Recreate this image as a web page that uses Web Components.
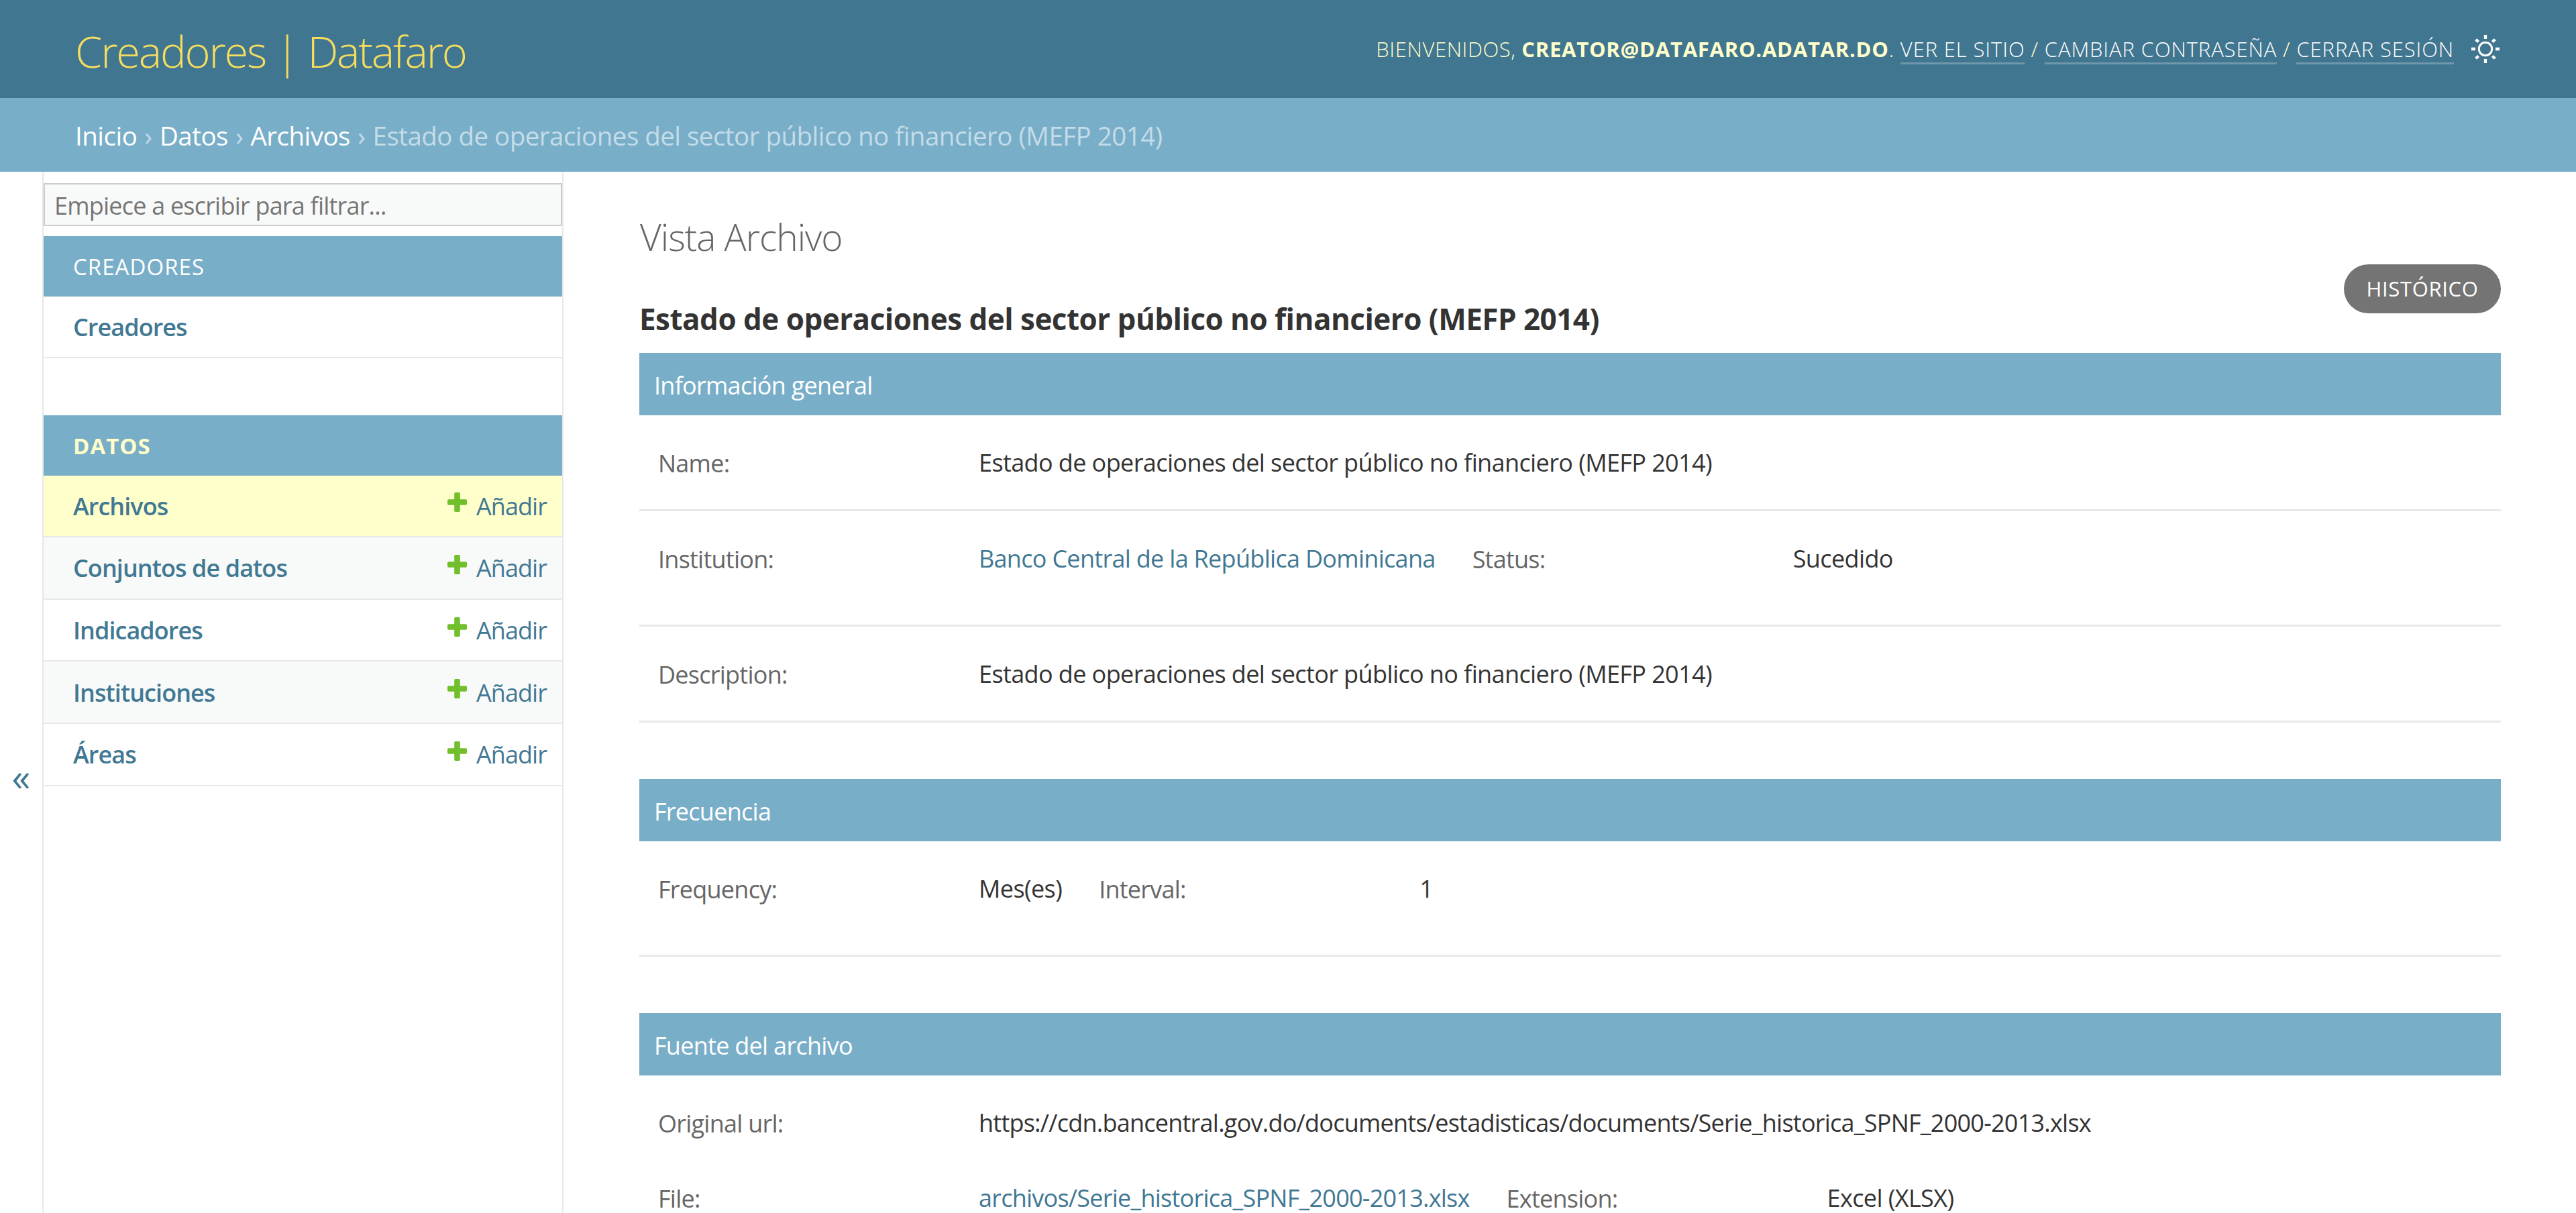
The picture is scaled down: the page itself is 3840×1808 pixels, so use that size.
<!DOCTYPE html>
<html lang="es">
<head>
<meta charset="utf-8">
<title>Estado de operaciones del sector público no financiero (MEFP 2014) | Datafaro</title>
<style>
  :root {
    --primary: #79aec8;
    --secondary: #417690;
    --accent: #f5dd5d;
    --link: #417893;
    --body-fg: #333;
    --quiet: #666;
    --hairline: #e8e8e8;
    --darkened: #f8faf9;
    --selected: #ffffcc;
  }

  body {
    margin: 0;
    height: 1808px;
    overflow: hidden;
    background: #fff;
    color: var(--body-fg);
    font-family: "Open Sans", "Liberation Sans", sans-serif;
    font-size: 36px;
  }

  .main {
    display: flex;
    height: 1552px;
  }
</style>
</head>
<body>
  <admin-header>
    <span slot="title">Creadores | Datafaro</span>
    <span slot="user">creator@datafaro.adatar.do</span>
  </admin-header>

  <admin-breadcrumbs current="Estado de operaciones del sector público no financiero (MEFP 2014)">
    <a>Inicio</a><a>Datos</a><a>Archivos</a>
  </admin-breadcrumbs>

  <div class="main">
    <nav-toggle></nav-toggle>
    <nav-sidebar>
      <app-module caption="Creadores">
        <model-row>Creadores</model-row>
      </app-module>
      <app-module caption="Datos" current>
        <model-row add current>Archivos</model-row>
        <model-row add alt>Conjuntos de datos</model-row>
        <model-row add>Indicadores</model-row>
        <model-row add alt>Instituciones</model-row>
        <model-row add>Áreas</model-row>
      </app-module>
    </nav-sidebar>

    <admin-content heading="Vista Archivo" subheading="Estado de operaciones del sector público no financiero (MEFP 2014)">
      <form-module heading="Información general">
        <form-row>
          <form-field label="Name:">Estado de operaciones del sector público no financiero (MEFP 2014)</form-field>
        </form-row>
        <form-row multi>
          <form-field label="Institution:" link>Banco Central de la República Dominicana</form-field>
          <form-field label="Status:">Sucedido</form-field>
        </form-row>
        <form-row>
          <form-field label="Description:">Estado de operaciones del sector público no financiero (MEFP 2014)</form-field>
        </form-row>
      </form-module>
      <form-module heading="Frecuencia">
        <form-row multi>
          <form-field label="Frequency:">Mes(es)</form-field>
          <form-field label="Interval:">1</form-field>
        </form-row>
      </form-module>
      <form-module heading="Fuente del archivo">
        <form-row open>
          <form-field label="Original url:" url>https://cdn.bancentral.gov.do/documents/estadisticas/documents/Serie_historica_SPNF_2000-2013.xlsx</form-field>
        </form-row>
        <form-row multi>
          <form-field label="File:" link url>archivos/Serie_historica_SPNF_2000-2013.xlsx</form-field>
          <form-field label="Extension:">Excel (XLSX)</form-field>
        </form-row>
      </form-module>
    </admin-content>
  </div>

<script>
// Small helper: open shadow root with the given markup
class BaseElement extends HTMLElement {
  constructor() {
    super();
    this.attachShadow({ mode: 'open' });
  }

  connectedCallback() {
    this.shadowRoot.innerHTML = this.render();
  }
}

class AdminHeader extends BaseElement {
  render() {
    return `
      <style>
        :host {
          display: flex;
          align-items: center;
          justify-content: space-between;
          box-sizing: border-box;
          height: 146px;
          padding: 0 114px 0 112px;
          background: var(--secondary);
          color: #ffc;
        }
        .brand {
          padding-top: 5px;
          color: var(--accent);
          font-size: 65px;
          font-weight: 300;
          letter-spacing: -2.2px;
        }
        .tools {
          display: flex;
          align-items: center;
          font-size: 31px;
          font-weight: 300;
          line-height: 40px;
          letter-spacing: 0.88px;
          text-transform: uppercase;
          white-space: pre;
        }
        .hello { letter-spacing: 0.6px; }
        strong { font-weight: 700; letter-spacing: 0.75px; }
        a {
          display: inline-block;
          margin-bottom: -3px;
          border-bottom: 3px solid rgba(255, 255, 255, 0.25);
          color: #fff;
        }
        svg {
          width: 42px;
          height: 42px;
          margin-left: 26px;
          stroke: #fff;
          fill: none;
        }
      </style>
      <div class="brand"><slot name="title"></slot></div>
      <div class="tools">
        <div><span class="hello">Bienvenidos, </span><strong><slot name="user"></slot></strong>. <a>Ver el sitio</a> / <a>Cambiar contraseña</a> / <a>Cerrar sesión</a></div>
        <svg viewBox="-21 -21 42 42">
          <circle r="9.7" stroke-width="2.9"/>
          <path stroke-width="4.3" d="M0-21V-15M0 21V15M-21 0H-15M21 0H15M-14.3-14.3L-10.4-10.4M14.3-14.3L10.4-10.4M-14.3 14.3L-10.4 10.4M14.3 14.3L10.4 10.4"/>
        </svg>
      </div>`;
  }
}

class AdminBreadcrumbs extends BaseElement {
  render() {
    return `
      <style>
        :host {
          display: flex;
          align-items: center;
          box-sizing: border-box;
          height: 110px;
          padding: 2px 112px 0;
          background: var(--primary);
          color: #c4dce8;
          font-size: 38.5px;
          letter-spacing: -0.52px;
          white-space: pre;
        }
        a { color: #fff; }
        i { padding: 0 1.8px; font-style: normal; }
      </style>
      ${[...this.querySelectorAll('a')].map(a => `<a>${a.textContent}</a><i> › </i>`).join('')}<span>${this.getAttribute('current')}</span>`.trim();
  }
}

class NavToggle extends BaseElement {
  render() {
    return `
      <style>
        :host {
          display: block;
          box-sizing: border-box;
          flex: 0 0 65px;
          padding-top: 871px;
          border-right: 2px solid var(--hairline);
          color: var(--link);
          font-size: 56px;
          line-height: 60px;
          text-align: center;
        }
      </style>
      «`;
  }
}

class NavSidebar extends BaseElement {
  render() {
    return `
      <style>
        :host {
          display: flex;
          flex-direction: column;
          flex: 0 0 773px;
          padding-top: 17px;
          border-right: 2px solid var(--hairline);
        }
        .filter {
          box-sizing: border-box;
          height: 64px;
          margin-bottom: 15px;
          padding: 2px 14px 0;
          border: 2px solid #ccc;
          background: var(--darkened);
          color: #757575;
          line-height: 60px;
          letter-spacing: -0.79px;
        }
        .apps {
          display: flex;
          flex-direction: column;
          gap: 85px;
        }
      </style>
      <div class="filter">Empiece a escribir para filtrar...</div>
      <div class="apps"><slot></slot></div>`;
  }
}

class AppModule extends BaseElement {
  render() {
    return `
      <style>
        :host { display: block; }
        .caption {
          box-sizing: border-box;
          height: 89.5px;
          padding: 2px 44px 0;
          background: var(--primary);
          color: #fff;
          font-size: 33px;
          line-height: 88px;
          letter-spacing: 1.04px;
          text-transform: uppercase;
        }
        :host([current]) .caption {
          color: #ffc;
          font-weight: 700;
          letter-spacing: 1px;
        }
      </style>
      <div class="caption">${this.getAttribute('caption')}</div>
      <slot></slot>`;
  }
}

class ModelRow extends BaseElement {
  render() {
    const add = this.hasAttribute('add') ? `
      <div class="add">
        <svg viewBox="0 0 29 29">
          <rect x="10.2" width="8.6" height="29" rx="1.8"/>
          <rect y="10.2" width="29" height="8.6" rx="1.8"/>
        </svg>
        <span>Añadir</span>
      </div>` : '';
    return `
      <style>
        :host {
          display: flex;
          align-items: center;
          justify-content: space-between;
          box-sizing: border-box;
          height: 92.6px;
          padding: 1px 23px 0 44px;
          border-bottom: 2px solid var(--hairline);
          color: var(--link);
          font-weight: 600;
          letter-spacing: -0.95px;
        }
        :host([alt]) { background: var(--darkened); }
        :host([current]) { background: var(--selected); }
        .add {
          display: flex;
          align-items: center;
          gap: 14px;
          font-weight: 400;
          letter-spacing: -0.95px;
        }
        svg {
          width: 29px;
          height: 29px;
          margin-bottom: 11px;
          fill: #70bf2b;
        }
      </style>
      <slot></slot>${add}`;
  }
}

class AdminContent extends BaseElement {
  render() {
    return `
      <style>
        :host {
          display: block;
          flex: 1;
          padding: 57px 112px 0 113px;
        }
        h1, h2 { margin: 0; white-space: nowrap; }
        h1 {
          color: var(--quiet);
          font-size: 55px;
          font-weight: 300;
          line-height: 80px;
          letter-spacing: -1px;
          padding-left: 1px;
        }
        .top {
          display: flex;
          justify-content: space-between;
          align-items: flex-start;
          height: 132px;
        }
        h2 {
          padding-top: 47px;
          font-size: 44px;
          font-weight: 700;
          line-height: 70px;
          letter-spacing: -0.53px;
        }
        .history {
          margin-top: 1px;
          box-sizing: border-box;
          width: 234px;
          height: 73px;
          border-radius: 37px;
          background: #747474;
          color: #fff;
          font-size: 31px;
          line-height: 72px;
          letter-spacing: 0.65px;
          text-align: center;
          text-transform: uppercase;
        }
        .modules {
          display: flex;
          flex-direction: column;
          gap: 84px;
          padding-top: 1px;
        }
      </style>
      <h1>${this.getAttribute('heading')}</h1>
      <div class="top">
        <h2>${this.getAttribute('subheading')}</h2>
        <a class="history">Histórico</a>
      </div>
      <div class="modules"><slot></slot></div>`;
  }
}

class FormModule extends BaseElement {
  render() {
    return `
      <style>
        :host { display: block; }
        .heading {
          box-sizing: border-box;
          height: 93px;
          padding: 3px 22px 0;
          background: var(--primary);
          color: #fff;
          line-height: 92px;
          letter-spacing: -0.72px;
        }
      </style>
      <div class="heading">${this.getAttribute('heading')}</div>
      <slot></slot>`;
  }
}

class FormRow extends BaseElement {
  render() {
    return `
      <style>
        :host {
          display: flex;
          gap: 55px;
          padding: 29px 28px 27px;
          border-bottom: 3px solid var(--hairline);
        }
        :host([multi]) { padding-bottom: 56px; }
        :host([open]) { padding-bottom: 0; border-bottom: 0; margin-bottom: -1px; }
      </style>
      <slot></slot>`;
  }
}

class FormField extends BaseElement {
  render() {
    return `
      <style>
        :host {
          display: flex;
          line-height: 84px;
          letter-spacing: -0.6px;
          white-space: nowrap;
        }
        .label {
          box-sizing: border-box;
          width: 478px;
          height: 84px;
          padding-top: 1px;
          color: var(--quiet);
          letter-spacing: -0.75px;
        }
        .value { height: 84px; }
        :host([link]) .value { color: var(--link); letter-spacing: -0.7px; }
        :host([url]) .value { letter-spacing: -0.76px; }
      </style>
      <div class="label">${this.getAttribute('label')}</div>
      <div class="value"><slot></slot></div>`;
  }
}

customElements.define('admin-header', AdminHeader);
customElements.define('admin-breadcrumbs', AdminBreadcrumbs);
customElements.define('nav-toggle', NavToggle);
customElements.define('nav-sidebar', NavSidebar);
customElements.define('app-module', AppModule);
customElements.define('model-row', ModelRow);
customElements.define('admin-content', AdminContent);
customElements.define('form-module', FormModule);
customElements.define('form-row', FormRow);
customElements.define('form-field', FormField);
</script>
</body>
</html>
